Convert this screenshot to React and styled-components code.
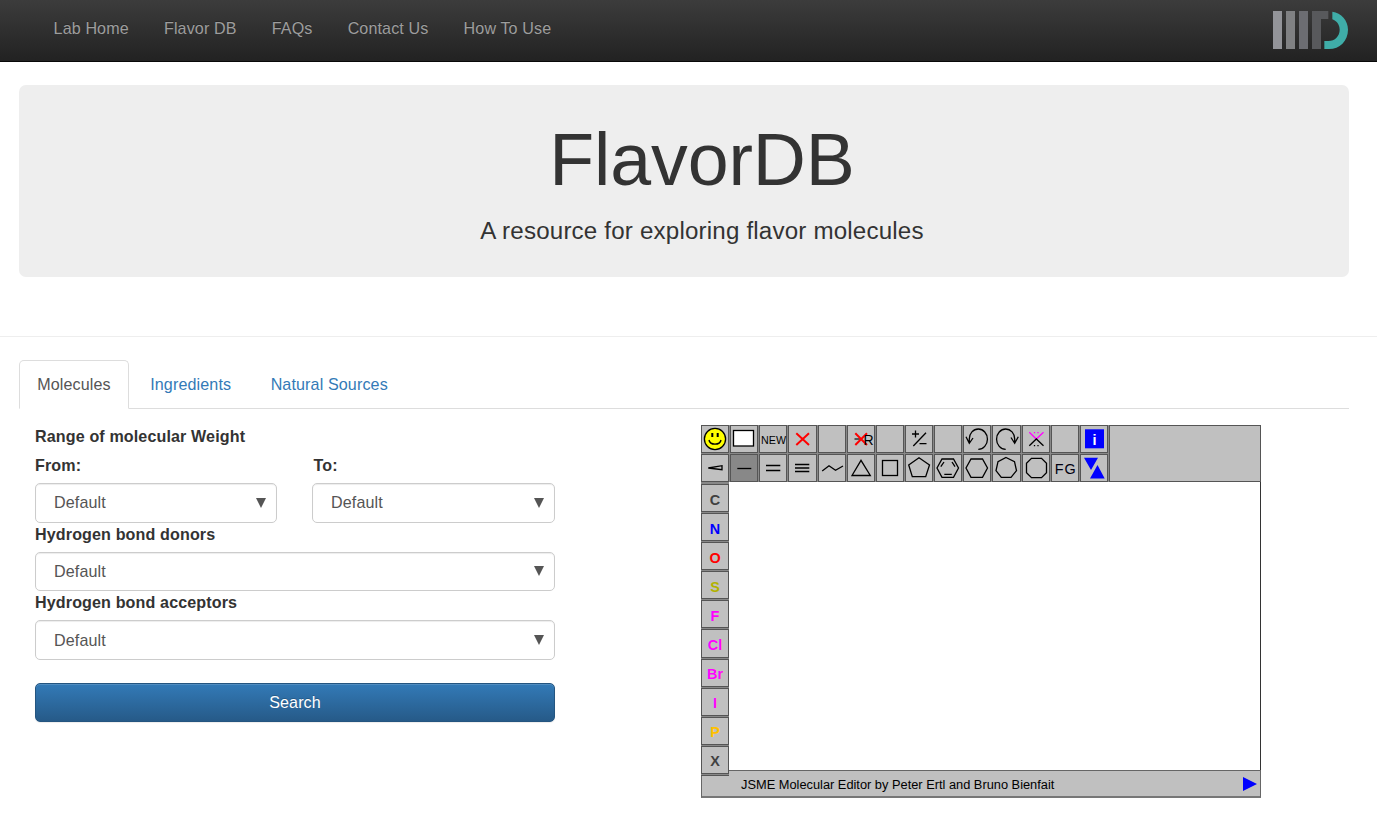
import React from "react";
import styled, { createGlobalStyle } from "styled-components";

const GlobalStyle = createGlobalStyle`
  * { box-sizing: border-box; }
  body {
    margin: 0;
    background: #fff;
    color: #333;
    font-family: Arial, "Liberation Sans", sans-serif;
    font-size: 16.1px;
    letter-spacing: 0.12px;
    line-height: 23px;
    overflow: hidden;
  }
`;

const Navbar = styled.nav`
  height: 62px;
  display: flex;
  justify-content: space-between;
  align-items: flex-start;
  padding: 0 28px 0 36px;
  background: linear-gradient(#3c3c3c, #222);
  border-bottom: 1px solid #080808;
`;

const NavLinks = styled.div`
  display: flex;
  padding-top: 17px;
`;

const NavLink = styled.a`
  padding: 0 17.58px;
  color: #9d9d9d;
  text-shadow: 0 -1px 0 rgba(0, 0, 0, 0.25);
`;

const Brand = styled.svg`
  width: 76px;
  height: 38px;
  margin-top: 11px;
`;

const Jumbotron = styled.header`
  height: 192px;
  margin: 23px 28px 0 19px;
  padding: 35px 0 0 36px;
  border-radius: 7px;
  background: #eee;
  text-align: center;
`;

const Title = styled.h1`
  margin: 0;
  font-size: 73.5px;
  font-weight: 500;
  letter-spacing: -0.1px;
  line-height: 80px;
`;

const Subtitle = styled.p`
  margin: 13px 0 0;
  font-size: 24.15px;
  letter-spacing: 0.18px;
  line-height: 35px;
`;

const Divider = styled.div`
  height: 1px;
  margin: 59px 0 23px;
  background: #eee;
`;

const Tabs = styled.div`
  display: flex;
  height: 49px;
  margin: 0 28px 0 19px;
  border-bottom: 1px solid #ddd;
`;

const Tab = styled.a`
  height: 49px;
  padding: 12px 17.6px 0 17.2px;
  margin-right: 2.7px;
  border: 1px solid transparent;
  border-radius: 5px 5px 0 0;
  color: #337ab7;
  ${(p) =>
    p.$active &&
    `
    color: #555;
    background: #fff;
    border-color: #ddd #ddd #fff;
  `}
`;

const Content = styled.main`
  display: flex;
  align-items: flex-start;
  padding: 16px 0 0 35px;
  gap: 146px;
`;

const Form = styled.form`
  width: 520px;
`;

const Label = styled.label`
  display: block;
  height: 29px;
  font-weight: 700;
`;

const FieldRow = styled.div`
  display: grid;
  grid-template-columns: 242px 243px;
  column-gap: 35px;
`;

const SecondLabel = styled(Label)`
  padding-left: 1.5px;
`;

const SelectBox = styled.div`
  display: flex;
  align-items: flex-start;
  justify-content: space-between;
  height: ${(p) => p.$height || 40}px;
  padding: ${(p) => p.$textTop || 7}px 10px 0 18px;
  border: 1px solid #ccc;
  border-radius: 5px;
  box-shadow: inset 0 1px 1px rgba(0, 0, 0, 0.075);
  color: #555;
`;

const Caret = styled.svg`
  width: 10px;
  height: 10px;
  margin-top: ${(p) => p.$top}px;
  fill: #555;
`;

const SearchButton = styled.button`
  display: block;
  width: 100%;
  height: 39px;
  margin-top: 23px;
  border: 1px solid #245580;
  border-radius: 5px;
  background: linear-gradient(#337ab7, #265a88);
  box-shadow: inset 0 1px 0 rgba(255, 255, 255, 0.15), 0 1px 1px rgba(0, 0, 0, 0.075);
  color: #fff;
  font: inherit;
  letter-spacing: inherit;
  text-shadow: 0 -1px 0 rgba(0, 0, 0, 0.2);
`;

const Editor = styled.section`
  width: 560px;
  letter-spacing: 0;
  line-height: 1;
`;

const EditorTop = styled.div`
  display: flex;
  height: 57px;
  background: #888;
`;

const ToolGrid = styled.div`
  display: grid;
  width: 408px;
  padding-right: 1px;
  grid-template-columns: repeat(14, 1fr);
  grid-template-rows: 28px 28px;
  gap: 1px;
`;

const Tool = styled.div`
  border: 1px solid #555;
  background: ${(p) => (p.$selected ? "#888" : "#c0c0c0")};
`;

const ToolIcon = styled.svg`
  display: block;
  width: 28px;
  height: 28px;
  margin: -1px;
  fill: none;
  stroke: #000;
  stroke-width: 1.3;
  overflow: visible;
  text {
    stroke: none;
    fill: #000;
    font-size: 14.4px;
  }
`;

const InfoPanel = styled.div`
  flex: 1;
  border: 1px solid #555;
  background: #c0c0c0;
`;

const EditorBody = styled.div`
  display: flex;
  height: 288px;
`;

const AtomBar = styled.div`
  display: grid;
  align-content: start;
  grid-template-rows: repeat(10, 28.1px);
  gap: 1px;
  width: 28px;
  height: 294px;
  padding-top: 2px;
  background: #888;
  position: relative;
  border-bottom: 1px solid #555;
`;

const Atom = styled.div`
  border: 1px solid #555;
  background: #c0c0c0;
  color: ${(p) => p.$color};
  padding-top: 7.6px;
  font-size: 14.4px;
  font-weight: 700;
  line-height: 14px;
  text-align: center;
`;

const Canvas = styled.div`
  flex: 1;
  background: #fff;
  border-right: 1px solid #333;
`;

const StatusBar = styled.div`
  display: flex;
  align-items: center;
  justify-content: space-between;
  height: 28px;
  padding: 0 3px 0 39px;
  border: 1px solid #666;
  border-bottom: 2px solid #777;
  background: #c0c0c0;
  color: #000;
  font-size: 12.82px;
  line-height: 15px;
`;

const StatusText = styled.span`
  padding-top: 1px;
`;

const PlayIcon = styled.svg`
  width: 14px;
  height: 14px;
  fill: #00f;
`;

const hexagon = "8,5 19.5,5 24.5,14 19.5,23.3 8,23.3 3,14";

const tools = [
  <>
    <circle cx="14" cy="14" r="10.6" fill="#ff0" />
    <path d="M11.3 8v4M16.7 8v4" strokeWidth="2" />
    <path d="M8 15c1 5.5 11 5.5 12 0" strokeWidth="1.4" />
  </>,
  <rect x="3.5" y="5.5" width="20" height="15.5" fill="#fff" />,
  <text x="2" y="18.5" textLength="25" lengthAdjust="spacingAndGlyphs" style={{ fontSize: 10 }}>NEW</text>,
  <path d="M8.3 8.3 21 20M21 8.3 8.3 20" stroke="#f00" strokeWidth="2" />,
  null,
  <>
    <path d="M7.5 14H14" stroke="#555" strokeWidth="2" />
    <path d="M8.3 8.3 20 20M20 8.3 8.3 20" stroke="#f00" strokeWidth="2" />
    <text x="16.5" y="20" style={{ fontSize: 14 }}>R</text>
  </>,
  null,
  <path d="M10.5 5.5v7M7 9h7M8.3 21 21 7.7M14.5 18.7h7" />,
  null,
  <path d="M6.3 18V14A9 10 0 0 1 15.3 4 9 10 0 0 1 15.3 24.3M3 11.7 6.3 18.3 10 13" />,
  <path d="M22.7 18V14A9 10 0 0 0 13.7 4 9 10 0 0 0 13.7 24.3M19 12.5 22.7 18.3 26.3 11.7" />,
  <>
    <path d="M7.3 7.3 14.3 14 21.5 7.3M12.5 7v1.3M16 7v1.3" stroke="#f0f" />
    <path d="M7.3 20.7 14.3 14 21.5 20.7M12.5 20v1.3M16 20v1.3" />
  </>,
  null,
  <>
    <rect x="5" y="4.3" width="19" height="19" fill="#00f" stroke="none" />
    <text x="12.4" y="19.5" style={{ fill: "#fff", fontWeight: 700 }}>i</text>
  </>,
  <path d="M7.3 14 21 11.7v4z" />,
  <path d="M7.3 14.5h14" />,
  <path d="M7 11.5h14.3M7 16.5h14.3" />,
  <path d="M7 10.5h14.3M7 14h14.3M7 17.5h14.3" />,
  <path d="M4.2 17 11 11.7 17.5 16.3 25 12" />,
  <path d="M14 6.3 5 21.5h18.3z" />,
  <rect x="6.5" y="6.5" width="15" height="15" />,
  <path d="M14 3.7 24.5 11 20.7 22.7H7.3L3.7 11z" />,
  <>
    <polygon points={hexagon} />
    <path d="M6.8 12.7 10 8M18 8l3 4.7M10.3 20.3h7.5" />
  </>,
  <polygon points={hexagon} />,
  <path d="M14 3.5 22.5 7.7 24.5 16.7 19 23.3H9.3L4 16.7 6 7.7z" />,
  <path d="M9.5 4.3h10l5 5v9.4l-5 5h-10l-5-5V9.3z" />,
  <text x="3.8" y="20.2" textLength="21" style={{ fill: "#001" }}>FG</text>,
  <path d="M4 3.7h14L11 16zM17.5 11 24.7 24.5H10z" fill="#00f" stroke="none" />,
];

const atoms = [
  ["C", "#404040"],
  ["N", "#00f"],
  ["O", "#f00"],
  ["S", "#b2b200"],
  ["F", "#f0f"],
  ["Cl", "#f0f"],
  ["Br", "#f0f"],
  ["I", "#f0f"],
  ["P", "#ffc000"],
  ["X", "#404040"],
];

function Select({ height, textTop, caretTop = 7 }) {
  return (
    <SelectBox $height={height} $textTop={textTop}>
      Default
      <Caret viewBox="0 0 10 10" $top={caretTop}>
        <path d="M0 0h10L5 10z" />
      </Caret>
    </SelectBox>
  );
}

function Logo() {
  return (
    <Brand viewBox="0 0 228 114">
      <path fill="#939499" d="M0 0h27v114H0z" />
      <path fill="#808183" d="M39 0h27v114H39z" />
      <path fill="#6c6d72" d="M78 0h27v114H78z" />
      <path fill="#58595c" d="M117 0h49v24h-22v90h-27z" />
      <path
        fill="#3fada8"
        d="M178 2C205 5 225 28 225 56c0 34-25 58-57 58h-14V90h12c20 0 34-15 34-34 0-14-8-26-22-31z"
      />
    </Brand>
  );
}

function MoleculeEditor() {
  return (
    <Editor>
      <EditorTop>
        <ToolGrid>
          {tools.map((icon, i) => (
            <Tool key={i} $selected={i === 15}>
              <ToolIcon viewBox="0 0 28 28">{icon}</ToolIcon>
            </Tool>
          ))}
        </ToolGrid>
        <InfoPanel />
      </EditorTop>
      <EditorBody>
        <AtomBar>
          {atoms.map(([symbol, color]) => (
            <Atom key={symbol} $color={color}>{symbol}</Atom>
          ))}
        </AtomBar>
        <Canvas />
      </EditorBody>
      <StatusBar>
        <StatusText>JSME Molecular Editor by Peter Ertl and Bruno Bienfait</StatusText>
        <PlayIcon viewBox="0 0 14 14">
          <path d="M0 0 14 7 0 14z" />
        </PlayIcon>
      </StatusBar>
    </Editor>
  );
}

export default function App() {
  return (
    <>
      <GlobalStyle />
      <Navbar>
        <NavLinks>
          {["Lab Home", "Flavor DB", "FAQs", "Contact Us", "How To Use"].map((t) => (
            <NavLink key={t}>{t}</NavLink>
          ))}
        </NavLinks>
        <Logo />
      </Navbar>
      <Jumbotron>
        <Title>FlavorDB</Title>
        <Subtitle>A resource for exploring flavor molecules</Subtitle>
      </Jumbotron>
      <Divider />
      <Tabs>
        <Tab $active>Molecules</Tab>
        <Tab>Ingredients</Tab>
        <Tab>Natural Sources</Tab>
      </Tabs>
      <Content>
        <Form>
          <Label>Range of molecular Weight</Label>
          <FieldRow>
            <Label>From:</Label>
            <SecondLabel>To:</SecondLabel>
            <Select />
            <Select />
          </FieldRow>
          <Label>Hydrogen bond donors</Label>
          <Select height={39} caretTop={6} />
          <Label>Hydrogen bond acceptors</Label>
          <Select textTop={8} caretTop={6} />
          <SearchButton type="button">Search</SearchButton>
        </Form>
        <MoleculeEditor />
      </Content>
    </>
  );
}
